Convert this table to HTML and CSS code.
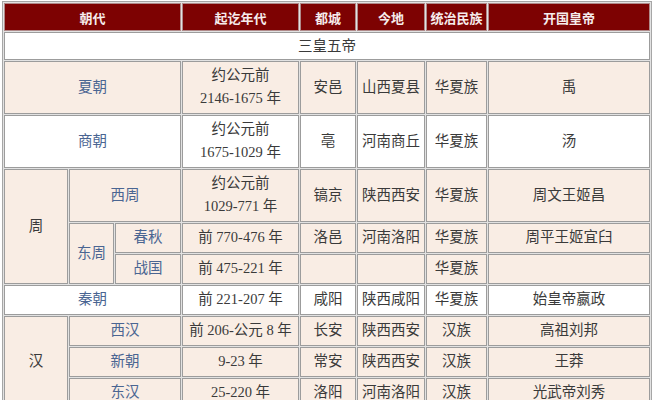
FILE: index.html
```html
<!DOCTYPE html>
<html lang="zh">
<head>
<meta charset="utf-8">
<title>朝代表</title>
<link rel="stylesheet" href="styles.css">
</head>
<body>
<table class="dyn">
  <colgroup>
    <col class="c1"><col class="c2"><col class="c3"><col class="c4">
    <col class="c5"><col class="c6"><col class="c7"><col class="c8">
  </colgroup>
  <thead>
    <tr class="head">
      <th colspan="3">朝代</th><th>起讫年代</th><th>都城</th><th>今地</th><th>统治民族</th><th>开国皇帝</th>
    </tr>
  </thead>
  <tbody>
    <tr class="white intro"><td colspan="8">三皇五帝</td></tr>
    <tr class="beige">
      <td colspan="3" class="name">夏朝</td><td>约公元前<br>2146-1675 年</td><td>安邑</td><td>山西夏县</td><td>华夏族</td><td>禹</td>
    </tr>
    <tr class="white">
      <td colspan="3" class="name">商朝</td><td>约公元前<br>1675-1029 年</td><td>亳</td><td>河南商丘</td><td>华夏族</td><td>汤</td>
    </tr>
    <tr class="beige">
      <td rowspan="3">周</td><td colspan="2" class="name">西周</td><td>约公元前<br>1029-771 年</td><td>镐京</td><td>陕西西安</td><td>华夏族</td><td>周文王姬昌</td>
    </tr>
    <tr class="beige">
      <td rowspan="2" class="name">东周</td><td class="name">春秋</td><td>前 770-476 年</td><td>洛邑</td><td>河南洛阳</td><td>华夏族</td><td>周平王姬宜臼</td>
    </tr>
    <tr class="beige">
      <td class="name">战国</td><td>前 475-221 年</td><td></td><td></td><td>华夏族</td><td></td>
    </tr>
    <tr class="white">
      <td colspan="3" class="name">秦朝</td><td>前 221-207 年</td><td>咸阳</td><td>陕西咸阳</td><td>华夏族</td><td>始皇帝嬴政</td>
    </tr>
    <tr class="beige">
      <td rowspan="3">汉</td><td colspan="2" class="name">西汉</td><td>前 206-公元 8 年</td><td>长安</td><td>陕西西安</td><td>汉族</td><td>高祖刘邦</td>
    </tr>
    <tr class="beige">
      <td colspan="2" class="name">新朝</td><td>9-23 年</td><td>常安</td><td>陕西西安</td><td>汉族</td><td>王莽</td>
    </tr>
    <tr class="beige">
      <td colspan="2" class="name">东汉</td><td>25-220 年</td><td>洛阳</td><td>河南洛阳</td><td>汉族</td><td>光武帝刘秀</td>
    </tr>
  </tbody>
</table>
</body>
</html>
```

FILE: styles.css
```css
html, body {
  margin: 0;
  padding: 0;
  background: #ffffff;
}

body {
  padding: 1px 2px 2px;
}

.dyn {
  width: 650px;
  table-layout: fixed;
  border-collapse: separate;
  border-spacing: 1px;
  border: 1px solid #a6a6a6;
  background: #e2e2e2;
  font-family: "Liberation Serif", "Noto Sans CJK SC", serif;
  font-size: 14.5px;
  color: #3a3a3a;
}

.c1 { width: 64px; }
.c2 { width: 45px; }
.c3 { width: 66px; }
.c4 { width: 117px; }
.c5 { width: 56px; }
.c6 { width: 68px; }
.c7 { width: 61px; }
.c8 { width: 162px; }

.dyn th,
.dyn td {
  border: 1px solid #9c9c9c;
  text-align: center;
  vertical-align: middle;
  padding: 2px 0 3px;
  line-height: 23px;
  box-sizing: border-box;
}

.head th {
  background: #7d0202;
  color: #f6ecec;
  font-family: "Noto Sans CJK SC", "Liberation Sans", sans-serif;
  font-weight: bold;
  font-size: 13px;
  height: 28px;
  padding: 0;
  border-color: #b08a8a;
}

.intro td {
  padding: 2px 0 1px;
}

.white td {
  background: #ffffff;
}

.beige td {
  background: #f9ede4;
}

.dyn td.name {
  color: #4a6592;
}
```
